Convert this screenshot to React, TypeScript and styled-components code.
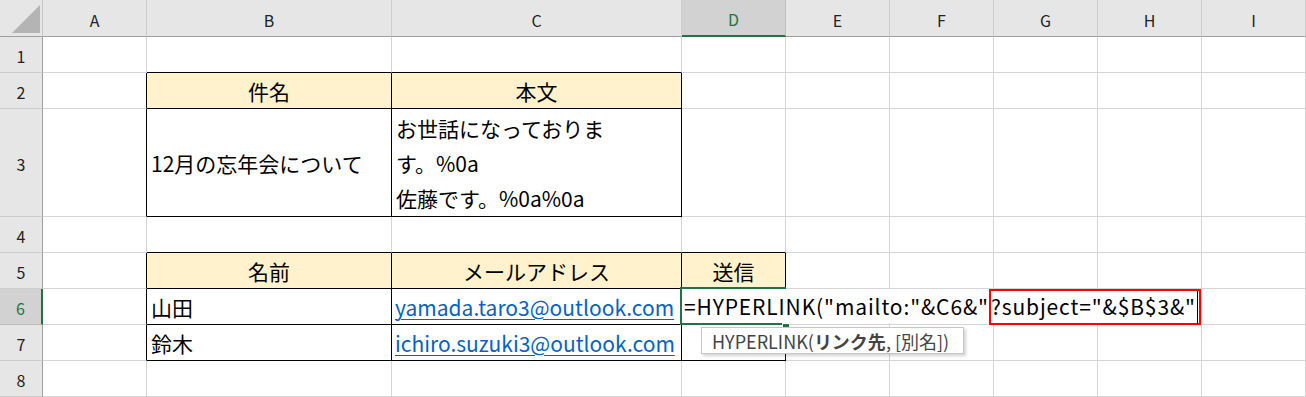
import React, { FC } from 'react';
import styled, { createGlobalStyle } from 'styled-components';

const GRID = '#d4d4d4';
const GREEN = '#217346';
const HEAD_LINE = '#9e9e9e';
const FONT = '"Noto Sans CJK JP", "Noto Sans", sans-serif';

const GlobalStyle = createGlobalStyle`
	html, body {
		margin: 0;
		padding: 0;
		background: #fff;
	}
	body {
		font-family: ${FONT};
		overflow: hidden;
	}
`;

const COLS = ['A', 'B', 'C', 'D', 'E', 'F', 'G', 'H', 'I'];
const COL_W = [104, 245, 290, 104, 104, 104, 104, 104, 104];
const ROW_H = [36, 36, 108, 36, 36, 36, 36, 36];
const ACTIVE_COL = 'D';
const ACTIVE_ROW = 6;

const BORDERED = new Set(['B2', 'C2', 'B3', 'C3', 'B5', 'C5', 'D5', 'B6', 'C6', 'D6', 'B7', 'C7', 'D7']);
const FILLED = new Set(['B2', 'C2', 'B5', 'C5', 'D5']);

const Sheet = styled.div`
	display: grid;
	grid-template-columns: 43px ${COL_W.map((w) => `${w}px`).join(' ')};
	grid-template-rows: 37px ${ROW_H.map((h) => `${h}px`).join(' ')};
	width: 1306px;
	height: 397px;
	overflow: hidden;
`;

const HeaderBase = styled.div`
	box-sizing: border-box;
	background: #e6e6e6;
	display: flex;
	align-items: center;
	justify-content: center;
	font-size: 16px;
	color: #222;
`;

const Corner = styled(HeaderBase)`
	position: relative;
	border-right: 1px solid #c8c8c8;
	border-bottom: 1px solid ${HEAD_LINE};

	&::after {
		content: '';
		position: absolute;
		left: 12px;
		top: 5px;
		width: 28px;
		height: 28px;
		background: #b4b4b4;
		clip-path: polygon(100% 0, 100% 100%, 0 100%);
	}
`;

const ColHeader = styled(HeaderBase)<{ $active: boolean }>`
	padding-top: 3px;
	border-right: 1px solid ${(p) => (p.$active ? '#bcbcbc' : '#cdcdcd')};
	border-bottom: ${(p) => (p.$active ? `2px solid ${GREEN}` : `1px solid ${HEAD_LINE}`)};
	background: ${(p) => (p.$active ? '#d2d2d2' : '#e6e6e6')};
	color: ${(p) => (p.$active ? GREEN : '#222')};
`;

const RowHeader = styled(HeaderBase)<{ $active: boolean }>`
	padding-top: 2px;
	border-right: ${(p) => (p.$active ? `2px solid ${GREEN}` : `1px solid ${HEAD_LINE}`)};
	border-bottom: 1px solid ${(p) => (p.$active ? '#bcbcbc' : '#cdcdcd')};
	background: ${(p) => (p.$active ? '#d2d2d2' : '#e6e6e6')};
	color: ${(p) => (p.$active ? GREEN : '#222')};
`;

const Cell = styled.div<{
	$right: boolean;
	$bottom: boolean;
	$fill: boolean;
	$center: boolean;
	$bottomAlign?: boolean;
}>`
	position: relative;
	box-sizing: border-box;
	min-width: 0;
	border-right: 1px solid ${(p) => (p.$right ? '#000' : GRID)};
	border-bottom: 1px solid ${(p) => (p.$bottom ? '#000' : GRID)};
	background: ${(p) => (p.$fill ? '#fff2cc' : '#fff')};
	display: flex;
	flex-direction: column;
	justify-content: ${(p) => (p.$bottomAlign ? 'flex-end' : 'center')};
	align-items: ${(p) => (p.$center ? 'center' : 'flex-start')};
	padding: 0 4px;
	font-size: 21px;
	color: #000;
	white-space: nowrap;
`;

const Lines = styled.div`
	line-height: 35px;
`;

const MailLink = styled.a`
	color: #0563c1;
	text-decoration: underline;
	text-underline-offset: 3px;
	text-decoration-thickness: 1px;
	margin-left: -1px;
`;

const Editor = styled.div`
	position: absolute;
	left: -2px;
	top: -2px;
	width: 106px;
	height: 38px;
	box-sizing: border-box;
	border: 2px solid ${GREEN};
	border-right: none;
	z-index: 3;
`;

const EditorLine = styled.div`
	display: flex;
	align-items: flex-start;
	box-sizing: border-box;
	width: 519px;
	height: 34px;
	padding-left: 2px;
	background: #fff;
	font-size: 21px;
	line-height: 34px;
	letter-spacing: 0.87px;
	color: #000;
	white-space: nowrap;
`;

const Highlight = styled.span`
	display: inline-flex;
	align-items: flex-start;
	box-sizing: border-box;
	height: 36px;
	padding-right: 1px;
	border: 2px solid #ff0000;
	line-height: 31px;
`;

const Caret = styled.span`
	display: inline-block;
	width: 1px;
	height: 33px;
	margin-left: 1px;
	background: #000;
`;

const FillHandle = styled.div`
	position: absolute;
	left: 100px;
	top: 34px;
	width: 8px;
	height: 7px;
	box-sizing: border-box;
	border: 1px solid #fff;
	background: ${GREEN};
`;

const Tooltip = styled.div`
	position: absolute;
	left: 19px;
	top: 38px;
	width: 263px;
	height: 27px;
	box-sizing: border-box;
	display: flex;
	align-items: center;
	padding-left: 10px;
	background: #fff;
	border: 1px solid #c6c6c6;
	box-shadow: 2px 2px 3px rgba(0, 0, 0, 0.18);
	font-size: 18px;
	color: #444;
	white-space: nowrap;
	z-index: 4;
`;

const TipArg = styled.b`
	font-weight: 700;
`;

const renderContent = (key: string) => {
	switch (key) {
		case 'B2':
			return '件名';
		case 'C2':
			return '本文';
		case 'B3':
			return '12月の忘年会について';
		case 'C3':
			return (
				<Lines>
					お世話になっておりま
					<br />
					す。%0a
					<br />
					佐藤です。%0a%0a
				</Lines>
			);
		case 'B5':
			return '名前';
		case 'C5':
			return 'メールアドレス';
		case 'D5':
			return '送信';
		case 'B6':
			return '山田';
		case 'C6':
			return <MailLink>yamada.taro3@outlook.com</MailLink>;
		case 'B7':
			return '鈴木';
		case 'C7':
			return <MailLink>ichiro.suzuki3@outlook.com</MailLink>;
		case 'D6':
			return (
				<>
					<Editor>
						<EditorLine>
							<span>=HYPERLINK("mailto:"&amp;C6&amp;"</span>
							<Highlight>
								?subject="&amp;$B$3&amp;"
								<Caret />
							</Highlight>
						</EditorLine>
						<FillHandle />
					</Editor>
					<Tooltip>
						HYPERLINK(<TipArg>リンク先</TipArg>, [別名])
					</Tooltip>
				</>
			);
		default:
			return null;
	}
};

const App: FC = () => (
	<>
		<GlobalStyle />
		<Sheet>
			<Corner />
			{COLS.map((c) => (
				<ColHeader key={c} $active={c === ACTIVE_COL}>
					{c}
				</ColHeader>
			))}
			{ROW_H.map((_, ri) => {
				const row = ri + 1;
				return (
					<React.Fragment key={row}>
						<RowHeader $active={row === ACTIVE_ROW}>{row}</RowHeader>
						{COLS.map((c, ci) => {
							const key = `${c}${row}`;
							const right = BORDERED.has(key) || BORDERED.has(`${COLS[ci + 1]}${row}`);
							const bottom = BORDERED.has(key) || BORDERED.has(`${c}${row + 1}`);
							return (
								<Cell
									key={key}
									$right={right}
									$bottom={bottom}
									$fill={FILLED.has(key)}
									$center={FILLED.has(key)}
									$bottomAlign={key === 'C3'}
								>
									{renderContent(key)}
								</Cell>
							);
						})}
					</React.Fragment>
				);
			})}
		</Sheet>
	</>
);

export default App;
